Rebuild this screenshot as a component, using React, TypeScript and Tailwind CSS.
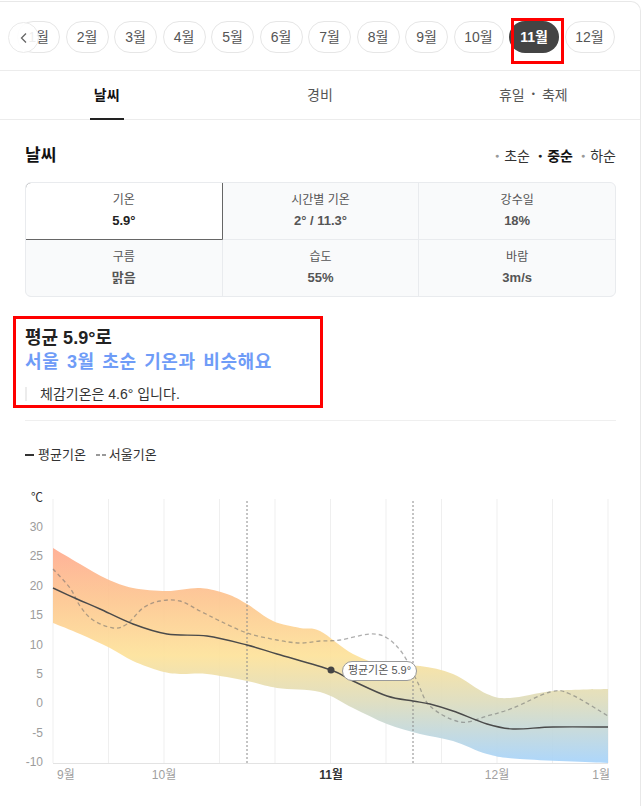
import React from "react";

type Pt = [number, number];

const months = ["1월", "2월", "3월", "4월", "5월", "6월", "7월", "8월", "9월", "10월", "11월", "12월"];

const stats = [
  { label: "기온", value: "5.9°", active: true },
  { label: "시간별 기온", value: "2° / 11.3°" },
  { label: "강수일", value: "18%" },
  { label: "구름", value: "맑음" },
  { label: "습도", value: "55%" },
  { label: "바람", value: "3m/s" },
];

// page coords of the chart (viewBox starts at y=480)
const bandTop: Pt[] = [
  [53, 547], [80, 563], [107, 578], [133, 587], [167, 590], [200, 587], [227, 593], [247, 603],
  [273, 620], [300, 627], [320, 630], [353, 653], [387, 665], [420, 665], [453, 673], [487, 693],
  [510, 697], [553, 690], [608, 688],
];
const bandBottom: Pt[] = [
  [53, 622], [80, 633], [110, 647], [133, 660], [160, 670], [180, 673], [207, 673], [247, 680],
  [277, 687], [320, 691], [353, 707], [387, 723], [420, 733], [453, 740], [487, 753], [520, 758],
  [608, 762],
];
const avgLine: Pt[] = [
  [53, 587], [77, 598], [100, 608], [133, 623], [167, 633], [207, 635], [247, 644], [277, 653],
  [331, 669], [353, 680], [387, 695], [413, 700], [430, 703], [453, 710], [487, 723], [513, 728],
  [553, 726], [608, 726],
];
const seoulLine: Pt[] = [
  [53, 568], [70, 587], [80, 605], [93, 619], [113, 627], [127, 623], [143, 607], [160, 600],
  [180, 600], [200, 610], [220, 620], [247, 632], [277, 639], [300, 642], [320, 640], [340, 639],
  [370, 633], [387, 637], [403, 653], [417, 680], [430, 705], [460, 721], [487, 715], [513, 707],
  [550, 691], [570, 693], [608, 715],
];

function smooth(pts: Pt[], move = true) {
  let d = move ? `M${pts[0][0]},${pts[0][1]}` : `L${pts[0][0]},${pts[0][1]}`;
  for (let i = 0; i < pts.length - 1; i++) {
    const p0 = pts[i - 1] || pts[i];
    const p1 = pts[i];
    const p2 = pts[i + 1];
    const p3 = pts[i + 2] || p2;
    const c1x = p1[0] + (p2[0] - p0[0]) / 6;
    const c1y = p1[1] + (p2[1] - p0[1]) / 6;
    const c2x = p2[0] - (p3[0] - p1[0]) / 6;
    const c2y = p2[1] - (p3[1] - p1[1]) / 6;
    d += ` C${c1x.toFixed(1)},${c1y.toFixed(1)} ${c2x.toFixed(1)},${c2y.toFixed(1)} ${p2[0]},${p2[1]}`;
  }
  return d;
}

const bandPath = smooth(bandTop) + " " + smooth([...bandBottom].reverse(), false) + " Z";

function Chart() {
  const yTicks = [30, 25, 20, 15, 10, 5, 0, -5, -10];
  const toY = (v: number) => 703 - v * 5.867;
  const grid = Array.from({ length: 11 }, (_, i) => 53 + i * 55.5);
  return (
    <svg width="641" height="326" viewBox="0 480 641 326" className="block"
      style={{ fontFamily: "'Liberation Sans','Noto Sans CJK KR',sans-serif" }}>
      <defs>
        <linearGradient id="band" gradientUnits="userSpaceOnUse" x1="0" y1="547" x2="0" y2="762">
          <stop offset="0" stopColor="#ffab8f" />
          <stop offset="0.25" stopColor="#fdc790" />
          <stop offset="0.5" stopColor="#fde29a" />
          <stop offset="0.72" stopColor="#dcdcbe" />
          <stop offset="1" stopColor="#a6d3fb" />
        </linearGradient>
      </defs>
      <text x="37" y="498" fontSize="12" fill="#333" textAnchor="middle" dominantBaseline="middle">℃</text>
      {yTicks.map((v) => (
        <text key={v} x="43" y={toY(v)} fontSize="12" fill="#9c9c9c" textAnchor="end" dominantBaseline="middle">{v}</text>
      ))}
      {grid.map((x) => (
        <line key={x} x1={x} x2={x} y1="498" y2="762" stroke="#efefef" strokeWidth="1" />
      ))}
      <line x1="53" x2="608" y1="762.5" y2="762.5" stroke="#e3e3e3" strokeWidth="1" />
      <path d={bandPath} fill="url(#band)" opacity="0.92" />
      <line x1="247" x2="247" y1="500" y2="762" stroke="#8a8a8a" strokeWidth="1" strokeDasharray="2 2" />
      <line x1="413" x2="413" y1="500" y2="762" stroke="#8a8a8a" strokeWidth="1" strokeDasharray="2 2" />
      <path d={smooth(seoulLine)} fill="none" stroke="rgba(110,110,110,0.55)" strokeWidth="1.3" strokeDasharray="4 3" />
      <path d={smooth(avgLine)} fill="none" stroke="#4a4a4a" strokeWidth="1.4" />
      <circle cx="331" cy="669" r="3.5" fill="#444" />
      <rect x="342.5" y="660.5" width="74" height="19" rx="9.5" fill="#fff" stroke="#9a9a9a" />
      <text x="379.5" y="670.5" fontSize="11" fill="#555" textAnchor="middle" dominantBaseline="middle">평균기온 5.9°</text>
      <text x="57" y="775" fontSize="12" fill="#a0a0a0" dominantBaseline="middle">9월</text>
      <text x="164" y="775" fontSize="12" fill="#a0a0a0" textAnchor="middle" dominantBaseline="middle">10월</text>
      <text x="331" y="775" fontSize="12" fill="#333" fontWeight="bold" textAnchor="middle" dominantBaseline="middle">11월</text>
      <text x="497" y="775" fontSize="12" fill="#a0a0a0" textAnchor="middle" dominantBaseline="middle">12월</text>
      <text x="610" y="775" fontSize="12" fill="#a0a0a0" textAnchor="end" dominantBaseline="middle">1월</text>
    </svg>
  );
}

export default function App() {
  return (
    <div className="w-[641px] h-[806px] overflow-hidden bg-white font-['Liberation_Sans','Noto_Sans_CJK_KR',sans-serif] text-[#333]">
      <div className="relative mt-px h-[805px] border-t border-r border-[#e8e8e8] rounded-tr-[10px]">
        {/* month pills */}
        <div className="relative flex gap-[5.5px] pl-[17px] pt-[19px] pb-[17px] border-b border-[#ececec]">
          {months.map((m) => {
            const on = m === "11월";
            return (
              <div key={m}
                className={`flex h-[32px] shrink-0 items-center justify-center rounded-full text-[14px] ${m.length > 2 ? "w-[50px]" : "w-[43px]"} ${on ? "bg-[#444] text-white font-bold" : "border border-[#e6e6e6] text-[#555]"}`}>
                {m}
              </div>
            );
          })}
          <div className="absolute left-0 top-[19px] h-[32px] w-[10px] bg-gradient-to-r from-white to-white/0" />
          <div className="absolute left-[8px] top-[20px] flex h-[31px] w-[31px] items-center justify-center rounded-full border border-[#eaeaea] bg-white/90">
            <svg width="10" height="12" viewBox="0 0 10 12"><path d="M7 1.5 L2.5 6 L7 10.5" fill="none" stroke="#666" strokeWidth="1.3" /></svg>
          </div>
          <div className="absolute left-[511px] top-[16px] h-[46px] w-[53px] border-[3px] border-[#ff0000]" />
        </div>

        {/* tabs */}
        <div className="grid grid-cols-3 h-[49px] border-b border-[#ececec] text-[14px]">
          <div className="flex items-center justify-center">
            <span className="relative flex h-full items-center font-bold text-[#111]">
              날씨
              <span className="absolute bottom-[-1px] left-[-4px] right-[-4px] h-[2px] bg-[#222]" />
            </span>
          </div>
          <div className="flex items-center justify-center text-[#555]">경비</div>
          <div className="flex items-center justify-center text-[#555]">휴일 <span className="mx-[7px] text-[9px]">•</span> 축제</div>
        </div>

        <div className="pl-[25px] pr-[24px]">
          {/* header */}
          <div className="mt-[24px] flex items-center justify-between h-[24px]">
            <h2 className="text-[17px] font-bold text-[#111]">날씨</h2>
            <div className="flex items-center gap-[5px] text-[14px] text-[#333]">
              <span className="text-[7px] text-[#999]">●</span><span>초순</span>
              <span className="ml-[3px] text-[7px] text-[#222]">●</span><span className="font-bold text-[#111]">중순</span>
              <span className="ml-[3px] text-[7px] text-[#999]">●</span><span>하순</span>
            </div>
          </div>

          {/* stats table */}
          <div className="mt-[14px] grid grid-cols-3 gap-px overflow-hidden rounded-[6px] border border-[#e9ebee] bg-[#e9ebee]">
            {stats.map((s) => (
              <div key={s.label}
                className={`relative flex h-[56px] flex-col items-center justify-center gap-[2px] ${s.active ? "bg-white" : "bg-[#f9fafb]"}`}>
                {s.active && <span className="absolute -left-px -top-px -right-px -bottom-px border border-[#666] rounded-tl-[6px]" />}
                <span className="text-[12px] text-[#555]">{s.label}</span>
                <span className={`text-[13px] font-bold ${s.active ? "text-[#222]" : "text-[#555]"}`}>{s.value}</span>
              </div>
            ))}
          </div>

          {/* summary */}
          <div className="relative mt-[29px] pb-[16px] border-b border-[#efefef]">
            <div className="absolute left-[-12px] top-[-10px] h-[92px] w-[310px] border-[3px] border-[#ff0000]" />
            <p className="text-[18px] leading-[24px] font-bold text-[#222]">평균 5.9°로</p>
            <p className="text-[18px] leading-[24px] font-bold text-[#6f9cf7] [word-spacing:2px] tracking-[0.6px]">서울 3월 초순 기온과 비슷해요</p>
            <div className="mt-[10px] flex items-center">
              <span className="h-[14px] w-[2px] bg-[#ececec]" />
              <span className="ml-[13px] text-[14px] leading-[20px] text-[#333]">체감기온은 4.6° 입니다.</span>
            </div>
          </div>

          {/* legend */}
          <div className="mt-[24px] flex items-center text-[13px] text-[#333]">
            <span className="h-[2px] w-[9px] bg-[#333]" />
            <span className="ml-[4px]">평균기온</span>
            <span className="ml-[10px] flex gap-[2px]"><span className="h-[1.5px] w-[4px] bg-[#999]" /><span className="h-[1.5px] w-[4px] bg-[#999]" /></span>
            <span className="ml-[3px]">서울기온</span>
          </div>
        </div>

        <div className="absolute left-0 top-[479px]">
          <Chart />
        </div>
      </div>
    </div>
  );
}
